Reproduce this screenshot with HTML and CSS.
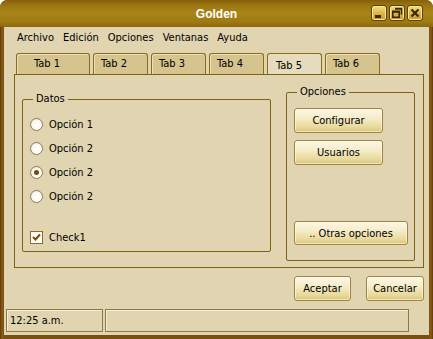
FILE: index.html
```html
<!DOCTYPE html>
<html lang="es">
<head>
<meta charset="utf-8">
<title>Golden</title>
<link rel="stylesheet" href="styles.css">
</head>
<body>
<div class="window">
  <div class="titlebar">
    <div class="title">Golden</div>
    <div class="tb-buttons">
      <span class="tbtn"><svg width="16" height="16" viewBox="0 0 16 16"><rect x="4" y="10" width="6" height="3" fill="#3a2a08"/></svg></span>
      <span class="tbtn"><svg width="16" height="16" viewBox="0 0 16 16"><path d="M6 3.5h6.5v6" fill="none" stroke="#3a2a08" stroke-width="1.6"/><rect x="3.8" y="6.3" width="6.4" height="6" fill="none" stroke="#3a2a08" stroke-width="1.6"/><rect x="3.8" y="6" width="6.4" height="1.8" fill="#3a2a08"/><rect x="6" y="3" width="6.5" height="1.6" fill="#3a2a08"/></svg></span>
      <span class="tbtn"><svg width="16" height="16" viewBox="0 0 16 16"><path d="M4.5 4.5l7 7M11.5 4.5l-7 7" stroke="#3a2a08" stroke-width="2.2"/></svg></span>
    </div>
  </div>
  <div class="client">
    <nav class="menubar">
      <span>Archivo</span><span>Edición</span><span>Opciones</span><span>Ventanas</span><span>Ayuda</span>
    </nav>
    <div class="tabs">
      <div class="tab wide">Tab 1</div>
      <div class="tab">Tab 2</div>
      <div class="tab">Tab 3</div>
      <div class="tab">Tab 4</div>
      <div class="tab active">Tab 5</div>
      <div class="tab">Tab 6</div>
    </div>
    <div class="panel">
      <fieldset class="group datos">
        <legend>Datos</legend>
        <div class="datos-body">
          <div class="opt"><span class="radio"></span>Opción 1</div>
          <div class="opt"><span class="radio"></span>Opción 2</div>
          <div class="opt"><span class="radio checked"></span>Opción 2</div>
          <div class="opt"><span class="radio"></span>Opción 2</div>
          <div class="opt check-row"><span class="check"><svg width="11" height="11" viewBox="0 0 11 11"><path d="M2 5l2.5 2.5L9 2.5" fill="none" stroke="#7a4c08" stroke-width="2"/></svg></span>Check1</div>
        </div>
      </fieldset>
      <fieldset class="group opciones">
        <legend>Opciones</legend>
        <div class="opciones-body">
          <button class="btn w89">Configurar</button>
          <button class="btn w89">Usuarios</button>
          <button class="btn otras">.. Otras opciones</button>
        </div>
      </fieldset>
    </div>
    <div class="actions">
      <button class="btn aceptar">Aceptar</button>
      <button class="btn cancelar">Cancelar</button>
    </div>
    <div class="status">
      <div class="cell time">12:25 a.m.</div>
      <div class="cell grow"></div>
    </div>
  </div>
</div>
</body>
</html>
```
FILE: styles.css
```css
* { box-sizing: border-box; }
html, body { margin: 0; padding: 0; background: #ffffff; }
body {
  font-family: "DejaVu Sans Condensed", "Liberation Sans", sans-serif;
  font-size: 11px;
  color: #000;
}
.window {
  width: 433px;
  height: 339px;
  background: linear-gradient(90deg, #5c3a08 0, #8a5c16 2px, #7a5010 4px, #7a5010 429px, #8a5c16 431px, #5c3a08 433px);
  border-radius: 7px 7px 0 0;
  display: flex;
  flex-direction: column;
  overflow: hidden;
}
.titlebar {
  height: 27px;
  display: grid;
  grid-template-columns: 1fr auto 1fr;
  align-items: center;
  background: linear-gradient(#86600a 0, #9c7812 6px, #a8841a 13px, #9e7a12 22px, #8c680c 27px);
  border-radius: 7px 7px 0 0;
}
.title {
  grid-column: 2;
  font-family: "Liberation Sans", sans-serif;
  font-weight: bold;
  font-size: 12px;
  color: #fff;
}
.tb-buttons {
  grid-column: 3;
  justify-self: end;
  display: flex;
  gap: 2px;
  padding-right: 10px;
  margin-top: -1px;
}
.tbtn {
  width: 16px;
  height: 16px;
  border-radius: 3px;
  border: 1px solid #5a4006;
  background: linear-gradient(#f4dc80, #d8b040 60%, #c89a28);
  box-shadow: inset 0 0 0 1px #f8e8a0;
  display: flex;
  align-items: center;
  justify-content: center;
}
.tbtn svg { display: block; margin: -1px; }
.client {
  margin: 0 4px 4px;
  height: 308px;
  background: #e1d4b0;
  display: flex;
  flex-direction: column;
}
.menubar {
  height: 20px;
  display: flex;
  align-items: center;
  gap: 9px;
  padding-left: 13px;
}
.tabs {
  margin-top: 6px;
  height: 22px;
  display: flex;
  gap: 3px;
  padding-left: 12px;
  margin-bottom: -1px;
}
.tab {
  width: 55px;
  height: 22px;
  padding: 3px 0 0 7px;
  background: #d6c48e;
  border: 1px solid #8a6c18;
  border-bottom: none;
  border-radius: 3px 3px 0 0;
  box-shadow: inset 1px 1px 0 #ece0bc;
}
.tab.wide { width: 74px; padding-left: 17px; }
.tab.active {
  background: #e6dbbd;
  padding-top: 5px;
  padding-left: 8px;
}
.panel {
  margin: 0 5px 0 10px;
  height: 194px;
  border: 1px solid #7e6212;
  display: flex;
  align-items: flex-start;
}
.group {
  margin: 0;
  padding: 0;
  border: 1px solid #7e6212;
  border-radius: 2px;
}
.group legend {
  margin-left: 10px;
  padding: 0 3px;
  line-height: 14px;
  font-size: 11px;
}
.datos {
  margin: 17px 0 0 7px;
  width: 249px;
  height: 160px;
}
.opciones {
  margin: 10px 0 0 15px;
  width: 129px;
  height: 176px;
}
.datos-body {
  padding: 6px 0 0 7px;
  display: flex;
  flex-direction: column;
}
.opt {
  height: 24px;
  display: flex;
  align-items: center;
}
.opt.check-row { margin-top: 17px; }
.radio {
  width: 13px;
  height: 13px;
  border-radius: 50%;
  border: 1px solid #8c7c5c;
  background: radial-gradient(circle at 60% 60%, #ffffff 0, #fbf8ef 50%, #e2dccb 100%);
  margin-right: 6px;
  display: flex;
  align-items: center;
  justify-content: center;
}
.radio.checked::after {
  content: "";
  width: 5px;
  height: 5px;
  border-radius: 50%;
  background: #7a4c08;
}
.check {
  width: 13px;
  height: 13px;
  border: 1px solid #8a6c30;
  background: #fffdf6;
  margin-right: 6px;
  display: flex;
  align-items: center;
  justify-content: center;
}
.check svg { display: block; }
.opciones-body {
  padding: 9px 0 0 7px;
  display: flex;
  flex-direction: column;
  align-items: flex-start;
}
.btn {
  font-family: "DejaVu Sans Condensed", "Liberation Sans", sans-serif;
  font-size: 11px;
  color: #000;
  height: 25px;
  padding: 0;
  border: 1px solid #a08440;
  border-radius: 3px;
  background: linear-gradient(#fcf8e8 0, #f5ecc8 40%, #e9d99c 78%, #dcc57a 100%);
  box-shadow: inset 0 0 0 1px rgba(255, 252, 235, 0.6);
}
.w89 { width: 89px; }
.w89 + .w89 { margin-top: 7px; }
.otras { width: 114px; height: 24px; margin-top: 56px; }
.actions {
  margin-top: 8px;
  height: 25px;
  display: flex;
  justify-content: flex-end;
  gap: 15px;
  padding-right: 5px;
}
.aceptar { width: 57px; }
.cancelar { width: 58px; }
.status {
  margin-top: 8px;
  height: 23px;
  display: flex;
  gap: 2px;
  padding-left: 2px;
}
.cell {
  height: 23px;
  border: 1px solid #8c7a44;
  box-shadow: inset 1px 1px 0 #f4ecd4;
  display: flex;
  align-items: center;
  padding-left: 3px;
}
.time { width: 97px; }
.grow { width: 304px; }
```
